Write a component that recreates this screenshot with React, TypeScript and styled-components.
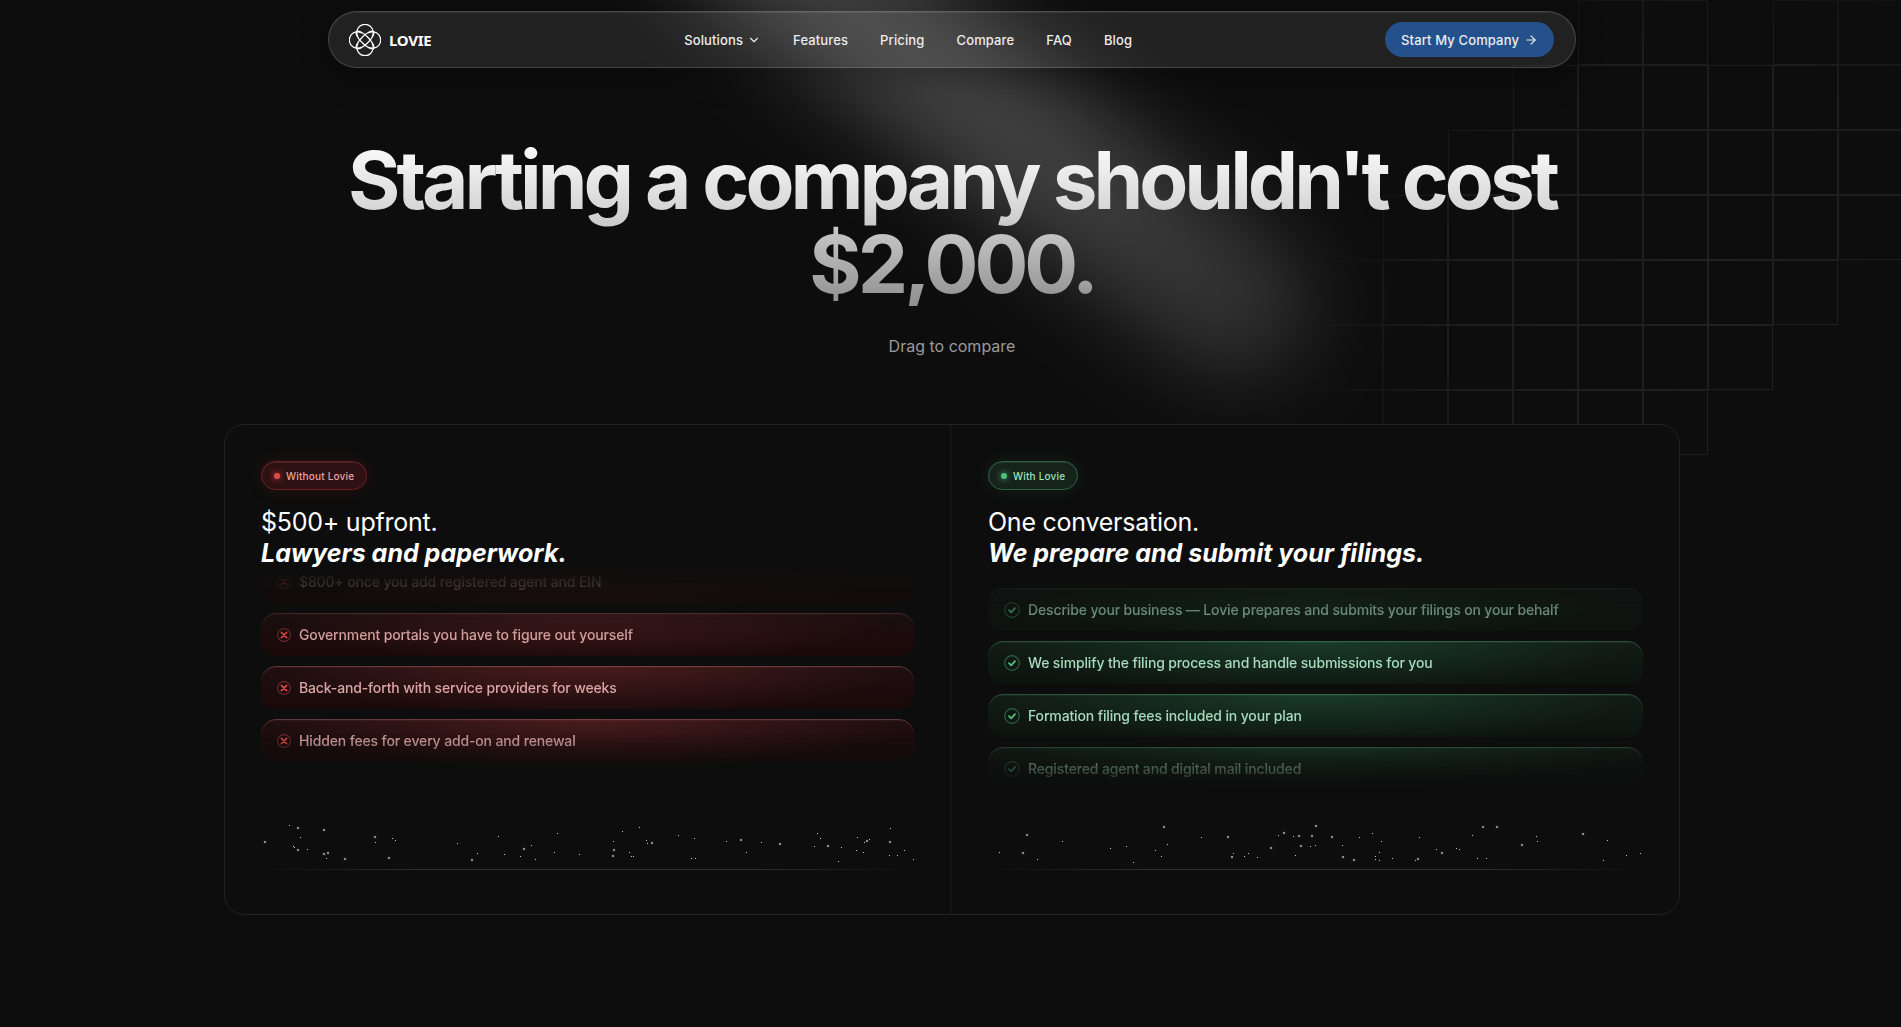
import React from "react";
import styled, { createGlobalStyle, css } from "styled-components";
import { ArrowRight, ChevronDown } from "lucide-react";

const Global = createGlobalStyle`
  *, *::before, *::after { box-sizing: border-box; }
  body {
    margin: 0;
    background: #0d0d0d;
    color: #fff;
    font-family: Inter, "Liberation Sans", sans-serif;
    -webkit-font-smoothing: antialiased;
  }
  h1, h2, p, ul { margin: 0; padding: 0; }
`;

const Page = styled.div`
  position: relative;
  min-height: 100vh;
  padding: 11px 24px 112px 27px;
  overflow: hidden;
  isolation: isolate;
`;

const Beam = styled.svg`
  position: absolute;
  top: 0;
  left: 50%;
  width: 1904px;
  height: 560px;
  margin-left: -952px;
  z-index: -1;
  pointer-events: none;
`;

const Grid = styled.svg`
  position: absolute;
  top: 0;
  right: 0;
  width: 601px;
  height: 460px;
  z-index: -1;
  pointer-events: none;
`;

const Nav = styled.header`
  display: flex;
  align-items: center;
  justify-content: space-between;
  max-width: 1248px;
  height: 57px;
  margin: 0 auto;
  padding: 0 21px 0 20px;
  border: 1px solid rgba(255, 255, 255, 0.16);
  border-radius: 29px;
  background: rgba(255, 255, 255, 0.085);
  box-shadow: inset 0 1px 0 rgba(255, 255, 255, 0.08), 0 8px 32px rgba(0, 0, 0, 0.3);
`;

const Brand = styled.a`
  display: flex;
  align-items: center;
  gap: 8px;
  color: #fff;
  font-family: "Noto Sans", sans-serif;
  font-size: 15px;
  font-weight: 700;
  line-height: 20px;
  letter-spacing: -0.02em;
  text-decoration: none;
`;

const navText = css`
  color: #ececec;
  font-family: Inter, "Liberation Sans", sans-serif;
  font-size: 13px;
  font-weight: 500;
  line-height: 20px;
  letter-spacing: 0.01em;
`;

const Links = styled.nav`
  display: flex;
  align-items: center;
  gap: 32px;
`;

const NavLink = styled.a`
  ${navText}
  text-decoration: none;
`;

const NavMenu = styled.button`
  ${navText}
  display: flex;
  align-items: center;
  gap: 4px;
  padding: 0;
  border: 0;
  background: none;
`;

const Cta = styled.button`
  ${navText}
  display: flex;
  align-items: center;
  gap: 5px;
  height: 35px;
  padding: 0 16px;
  border: 0;
  border-radius: 18px;
  background: #24508c;
`;

const Hero = styled.section`
  display: flex;
  flex-direction: column;
  align-items: center;
  gap: 28px;
  margin-top: 70px;
  text-align: center;
`;

const Title = styled.h1`
  max-width: 1300px;
  background: linear-gradient(180deg, #fff 0%, #d4d4d4 44%, #8e8e8e 100%);
  background-clip: text;
  -webkit-background-clip: text;
  color: transparent;
  font-size: 80px;
  font-weight: 700;
  line-height: 84px;
  letter-spacing: -0.05em;
`;

const Hint = styled.p`
  color: #9a9a9a;
  font-size: 16px;
  line-height: 24px;
`;

const Compare = styled.section`
  display: grid;
  grid-template-columns: 1fr 1fr;
  max-width: 1456px;
  margin: 66px auto 0;
  border: 1px solid #222;
  border-radius: 20px;
  background: #0d0d0d;
`;

type Tone = "red" | "green";

const Panel = styled.article`
  display: flex;
  flex-direction: column;
  align-items: flex-start;
  min-width: 0;
  padding: 36px 36px 44px;
  &:first-child {
    border-right: 2px solid #151515;
  }
`;

const tones = {
  red: css`
    --text: #eba3a3;
    --dot: #e04a4a;
    --edge: #6e1f1f;
    --fill: #2e1112;
    --glow: rgba(220, 60, 60, 0.14);
  `,
  green: css`
    --text: #9fe3bd;
    --dot: #4cc07c;
    --edge: #2a6243;
    --fill: #15231b;
    --glow: rgba(70, 200, 130, 0.12);
  `,
};

const Badge = styled.span<{ $tone: Tone }>`
  ${(p) => tones[p.$tone]}
  display: flex;
  align-items: center;
  gap: 6px;
  height: 29px;
  padding: 0 12px;
  border: 1px solid var(--edge);
  border-radius: 15px;
  background: var(--fill);
  box-shadow: 0 0 16px var(--glow), inset 0 1px 0 rgba(255, 255, 255, 0.08);
  color: var(--text);
  font-size: 10px;
  font-weight: 500;
  line-height: 16px;
  letter-spacing: 0.02em;
  &::before {
    content: "";
    width: 6px;
    height: 6px;
    border-radius: 3px;
    background: var(--dot);
    box-shadow: 0 0 6px var(--dot);
  }
`;

const Heading = styled.h2`
  margin-top: 17px;
  font-size: 25px;
  font-weight: 400;
  line-height: 31px;
  letter-spacing: -0.01em;
  em {
    display: block;
    font-weight: 700;
    letter-spacing: 0;
  }
`;

const Feed = styled.div`
  width: 100%;
  height: 221px;
  margin-top: 2px;
  overflow: hidden;
  mask-image: linear-gradient(
    180deg,
    rgba(0, 0, 0, 0.04) 0,
    rgba(0, 0, 0, 0.22) 14px,
    #000 68px,
    #000 161px,
    transparent 219px
  );
`;

const List = styled.ul<{ $shift: number }>`
  display: flex;
  flex-direction: column;
  gap: 10px;
  padding-top: 17px;
  transform: translateY(${(p) => p.$shift}px);
  list-style: none;
`;

const rowTones = {
  red: css`
    color: #dba5a5;
    background:
      radial-gradient(50% 120% at 50% 0, rgba(205, 70, 70, 0.24), transparent 100%),
      linear-gradient(180deg, #1f0f10, #190909);
    --top: rgba(255, 190, 190, 0.2);
    --side: rgba(220, 90, 90, 0.1);
    --ring: #702a2a;
    --mark: #e04a4a;
  `,
  green: css`
    color: #a6dcbc;
    background:
      radial-gradient(50% 120% at 50% 0, rgba(50, 150, 90, 0.26), transparent 100%),
      linear-gradient(180deg, #121b16, #0d1410);
    --top: rgba(130, 220, 165, 0.2);
    --side: rgba(80, 190, 120, 0.1);
    --ring: #2a6144;
    --mark: #4cc07c;
  `,
};

const Row = styled.li<{ $tone: Tone }>`
  ${(p) => rowTones[p.$tone]}
  display: flex;
  flex: none;
  align-items: center;
  gap: 8px;
  height: 43px;
  padding: 0 16px;
  border-radius: 15px;
  box-shadow: inset 0 1px 0 var(--top), inset 0 2px 1px var(--side);
  font-size: 14px;
  font-weight: 500;
  line-height: 20px;
  letter-spacing: -0.01em;
`;

const SparkField = styled.svg`
  display: block;
  width: 100%;
  height: 77px;
  fill: #fff;
`;

const Rule = styled.div`
  width: 100%;
  height: 1px;
  background: linear-gradient(90deg, transparent 1%, #303030 25%, #303030 75%, transparent 99%);
`;

const Logo = () => (
  <svg width="32" height="32" viewBox="-16 -16 32 32" fill="none" stroke="#fff" strokeWidth="1.2" aria-hidden="true">
    {[0, 90, 180, 270].map((a) => (
      <path key={a} transform={`rotate(${a})`} d="M-7 -3.2A8.2 8.2 0 1 1 7 -3.2" />
    ))}
    <ellipse rx="12" ry="3.9" transform="rotate(45)" />
    <ellipse rx="12" ry="3.9" transform="rotate(-45)" />
  </svg>
);

const Mark = ({ tone }: { tone: Tone }) => {
  const size = tone === "red" ? 14 : 16;
  return (
    <svg width={size} height={size} viewBox="0 0 16 16" fill="none" aria-hidden="true">
      <circle cx="8" cy="8" r="7.3" stroke="var(--ring)" strokeWidth="1.2" />
      <path
        d={tone === "red" ? "M5 5l6 6M11 5l-6 6" : "M5 8.2l2.2 2.1L11 6.2"}
        stroke="var(--mark)"
        strokeWidth="1.8"
        strokeLinecap="round"
        strokeLinejoin="round"
      />
    </svg>
  );
};

/* One entry per run of cells in the hero grid: row, first column, last column */
const CELL = 65;
const gridRuns = [
  [0, 4, 5],
  [0, 7, 8],
  [1, 3, 8],
  [2, 2, 8],
  [3, 1, 8],
  [4, 0, 7],
  [5, 0, 6],
  [6, 0, 5],
];

const HeroGrid = () => (
  <Grid viewBox="0 0 601 460" aria-hidden="true">
    <defs>
      <radialGradient id="gridFade" gradientUnits="userSpaceOnUse" cx="400" cy="300" r="430">
        <stop offset="0" stopColor="#fff" />
        <stop offset="0.6" stopColor="#fff" stopOpacity="0.7" />
        <stop offset="0.95" stopColor="#fff" stopOpacity="0" />
      </radialGradient>
      <mask id="gridMask" maskUnits="userSpaceOnUse" x="0" y="0" width="601" height="460">
        <rect width="601" height="460" fill="url(#gridFade)" />
      </mask>
    </defs>
    <g mask="url(#gridMask)" fill="none" stroke="#fff" strokeOpacity="0.09">
      {gridRuns.flatMap(([row, from, to]) =>
        Array.from({ length: to - from + 1 }, (_, i) => (
          <rect
            key={`${row}-${from + i}`}
            x={18.5 + (from + i) * CELL}
            y={row * CELL + 0.5}
            width={CELL - 1}
            height={CELL - 1}
          />
        ))
      )}
    </g>
  </Grid>
);

const HeroBeam = () => (
  <Beam viewBox="0 0 1904 560" aria-hidden="true">
    <defs>
      <linearGradient id="beamFill" gradientUnits="userSpaceOnUse" x1="740" y1="-70" x2="1260" y2="330">
        <stop offset="0" stopColor="#fff" stopOpacity="0.21" />
        <stop offset="0.6" stopColor="#fff" stopOpacity="0.21" />
        <stop offset="1" stopColor="#fff" stopOpacity="0.14" />
      </linearGradient>
      <filter id="beamBlur" filterUnits="userSpaceOnUse" x="300" y="-400" width="1300" height="1000">
        <feGaussianBlur stdDeviation="42" />
      </filter>
    </defs>
    <path
      d="M740 -76L1238 304"
      stroke="url(#beamFill)"
      strokeWidth="150"
      strokeLinecap="round"
      filter="url(#beamBlur)"
    />
  </Beam>
);

/* x, y, size */
const leftSparks = [
  [3, 49, 2], [28, 33, 1], [36, 35, 2], [39, 45, 1], [32, 54, 1], [33, 55, 1], [36, 57, 2], [46, 57, 1],
  [62, 37, 2], [62, 61, 2], [66, 60, 2], [65, 66, 1], [83, 66, 2], [113, 44, 2], [114, 50, 1], [131, 46, 1],
  [134, 48, 1], [127, 65, 2], [196, 51, 1], [210, 67, 2], [216, 61, 1], [237, 44, 1], [243, 62, 1],
  [262, 56, 2], [259, 64, 1], [270, 53, 1], [274, 67, 1], [293, 60, 1], [296, 41, 1], [318, 62, 1],
  [352, 49, 1], [352, 57, 2], [351, 63, 2], [361, 39, 1], [378, 35, 1], [368, 60, 1], [370, 64, 1],
  [372, 64, 1], [385, 48, 1], [386, 51, 1], [390, 50, 2], [417, 43, 1], [433, 46, 1], [430, 66, 1],
  [434, 66, 1], [465, 49, 1], [479, 47, 2], [485, 60, 1], [500, 50, 1], [518, 51, 2], [556, 41, 1],
  [559, 46, 1], [553, 54, 1], [566, 53, 2], [580, 55, 1], [577, 69, 1], [596, 45, 1], [595, 58, 1],
  [603, 50, 1], [605, 48, 2], [608, 47, 1], [602, 60, 1], [629, 36, 1], [628, 49, 2], [628, 63, 1],
  [636, 63, 1], [643, 58, 1], [652, 67, 1],
];

const rightSparks = [
  [11, 60, 1], [34, 60, 2], [38, 42, 2], [49, 67, 1], [74, 49, 1], [122, 56, 1], [138, 54, 1], [145, 70, 1],
  [167, 58, 1], [173, 64, 1], [175, 34, 2], [179, 52, 1], [213, 45, 1], [239, 44, 2], [245, 61, 1],
  [243, 64, 2], [256, 64, 1], [260, 61, 1], [269, 65, 1], [282, 55, 2], [290, 43, 1], [295, 40, 2],
  [305, 44, 1], [310, 43, 2], [323, 43, 2], [327, 33, 2], [312, 53, 2], [322, 54, 1], [327, 53, 1],
  [307, 63, 1], [343, 44, 2], [354, 53, 1], [354, 64, 2], [365, 67, 2], [371, 45, 1], [384, 41, 1],
  [393, 49, 1], [391, 60, 1], [387, 64, 1], [387, 67, 1], [391, 68, 1], [404, 66, 1], [427, 68, 1],
  [429, 66, 2], [431, 45, 1], [448, 57, 1], [453, 60, 2], [468, 56, 1], [471, 57, 1], [484, 43, 1],
  [494, 34, 2], [508, 34, 2], [489, 66, 1], [498, 66, 1], [533, 52, 2], [548, 44, 1], [549, 49, 1],
  [594, 41, 2], [619, 48, 1], [615, 68, 1], [638, 63, 1], [652, 61, 1],
];

const Sparks = ({ points }: { points: number[][] }) => (
  <SparkField aria-hidden="true">
    {points.map(([x, y, s], i) => (
      <g key={i}>
        {s === 2 && <circle cx={x + 1} cy={y + 1} r="2.5" fillOpacity="0.04" />}
        <rect x={x} y={y} width={s} height={s} fillOpacity={s === 2 ? 0.5 : 0.75} />
      </g>
    ))}
  </SparkField>
);

const links = ["Features", "Pricing", "Compare", "FAQ", "Blog"];

const columns: { tone: Tone; badge: string; lead: string; strong: string; shift: number; rows: string[]; sparks: number[][] }[] = [
  {
    tone: "red",
    badge: "Without Lovie",
    lead: "$500+ upfront.",
    strong: "Lawyers and paperwork.",
    shift: -28,
    rows: [
      "$800+ once you add registered agent and EIN",
      "Government portals you have to figure out yourself",
      "Back-and-forth with service providers for weeks",
      "Hidden fees for every add-on and renewal",
    ],
    sparks: leftSparks,
  },
  {
    tone: "green",
    badge: "With Lovie",
    lead: "One conversation.",
    strong: "We prepare and submit your filings.",
    shift: 0,
    rows: [
      "Describe your business — Lovie prepares and submits your filings on your behalf",
      "We simplify the filing process and handle submissions for you",
      "Formation filing fees included in your plan",
      "Registered agent and digital mail included",
    ],
    sparks: rightSparks,
  },
];

export default function App() {
  return (
    <>
      <Global />
      <Page>
        <HeroBeam />
        <HeroGrid />
        <Nav>
          <Brand href="#">
            <Logo />
            LOVIE
          </Brand>
          <Links>
            <NavMenu type="button">
              Solutions
              <ChevronDown size={14} />
            </NavMenu>
            {links.map((label) => (
              <NavLink key={label} href="#">
                {label}
              </NavLink>
            ))}
          </Links>
          <Cta type="button">
            Start My Company
            <ArrowRight size={14} />
          </Cta>
        </Nav>
        <Hero>
          <Title>Starting a company shouldn't cost $2,000.</Title>
          <Hint>Drag to compare</Hint>
        </Hero>
        <Compare>
          {columns.map((c) => (
            <Panel key={c.tone}>
              <Badge $tone={c.tone}>{c.badge}</Badge>
              <Heading>
                {c.lead}
                <em>{c.strong}</em>
              </Heading>
              <Feed>
                <List $shift={c.shift}>
                  {c.rows.map((text) => (
                    <Row $tone={c.tone} key={text}>
                      <Mark tone={c.tone} />
                      {text}
                    </Row>
                  ))}
                </List>
              </Feed>
              <Sparks points={c.sparks} />
              <Rule />
            </Panel>
          ))}
        </Compare>
      </Page>
    </>
  );
}
